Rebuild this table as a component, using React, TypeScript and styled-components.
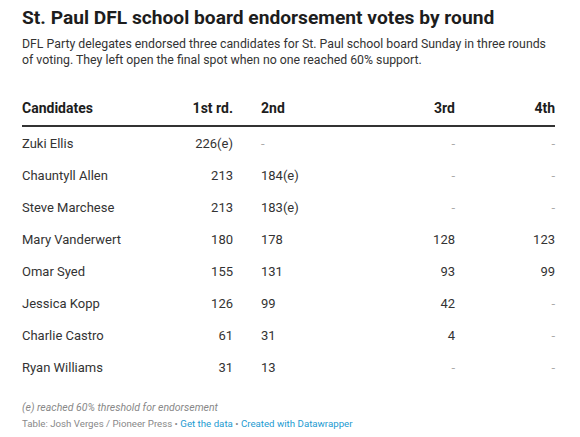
import React from 'react';
import styled, { createGlobalStyle } from 'styled-components';

const GlobalStyle = createGlobalStyle`
  html, body {
    margin: 0;
    padding: 0;
    background: #fff;
    font-family: Roboto, "Liberation Sans", sans-serif;
    color: #333;
  }
`;

const Chart = styled.div`
  width: 533px;
  padding: 6px 0 0 22px;
`;

const Title = styled.h1`
  margin: 0;
  font-size: 19.2px;
  line-height: 24px;
  font-weight: 700;
  color: #1d1d1d;
`;

const Intro = styled.p`
  margin: 6px 0 0;
  max-width: 525px;
  font-size: 12.3px;
  line-height: 16px;
  color: #333;
`;

const Table = styled.div`
  display: grid;
  grid-template-columns: 140px 71px 122px 100px 100px;
  margin-top: 24px;
`;

const Cell = styled.div<{ $align?: 'left' | 'right'; $head?: boolean; $pad?: boolean; $muted?: boolean }>`
  height: ${p => (p.$head ? '35px' : '32px')};
  display: flex;
  align-items: center;
  justify-content: ${p => (p.$align === 'right' ? 'flex-end' : 'flex-start')};
  padding-left: ${p => (p.$pad ? '28px' : '0')};
  font-size: ${p => (p.$head ? '14px' : '13px')};
  font-weight: ${p => (p.$head ? 700 : 400)};
  color: ${p => (p.$muted ? '#aaa' : p.$head ? '#1d1d1d' : '#333')};
  border-bottom: ${p => (p.$head ? '2px solid #333' : 'none')};
  box-sizing: border-box;
  padding-bottom: ${p => (p.$head ? '1px' : '0')};
`;

const Notes = styled.div`
  margin-top: 17px;
`;

const Note = styled.div`
  font-size: 10.5px;
  line-height: 15px;
  font-style: italic;
  color: #888;
`;

const Source = styled.div`
  margin-top: 1px;
  font-size: 9.7px;
  line-height: 15px;
  color: #888;
`;

const Link = styled.a`
  color: #1d9bd1;
  text-decoration: none;
`;

const columns: { label: string; align: 'left' | 'right'; pad?: boolean }[] = [
  { label: 'Candidates', align: 'left' },
  { label: '1st rd.', align: 'right' },
  { label: '2nd', align: 'left', pad: true },
  { label: '3rd', align: 'right' },
  { label: '4th', align: 'right' },
];

const rows = [
  ['Zuki Ellis', '226(e)', '-', '-', '-'],
  ['Chauntyll Allen', '213', '184(e)', '-', '-'],
  ['Steve Marchese', '213', '183(e)', '-', '-'],
  ['Mary Vanderwert', '180', '178', '128', '123'],
  ['Omar Syed', '155', '131', '93', '99'],
  ['Jessica Kopp', '126', '99', '42', '-'],
  ['Charlie Castro', '61', '31', '4', '-'],
  ['Ryan Williams', '31', '13', '-', '-'],
];

export default function App() {
  return (
    <Chart>
      <GlobalStyle />
      <Title>St. Paul DFL school board endorsement votes by round</Title>
      <Intro>
        DFL Party delegates endorsed three candidates for St. Paul school board Sunday in three rounds
        of voting. They left open the final spot when no one reached 60% support.
      </Intro>
      <Table>
        {columns.map(c => (
          <Cell key={c.label} $head $align={c.align} $pad={c.pad}>
            {c.label}
          </Cell>
        ))}
        {rows.map(r =>
          r.map((v, i) => (
            <Cell
              key={r[0] + i}
              $align={columns[i].align}
              $pad={columns[i].pad}
              $muted={v === '-'}
            >
              {v}
            </Cell>
          ))
        )}
      </Table>
      <Notes>
        <Note>(e) reached 60% threshold for endorsement</Note>
        <Source>
          Table: Josh Verges / Pioneer Press • <Link href="#">Get the data</Link> •{' '}
          <Link href="#">Created with Datawrapper</Link>
        </Source>
      </Notes>
    </Chart>
  );
}
